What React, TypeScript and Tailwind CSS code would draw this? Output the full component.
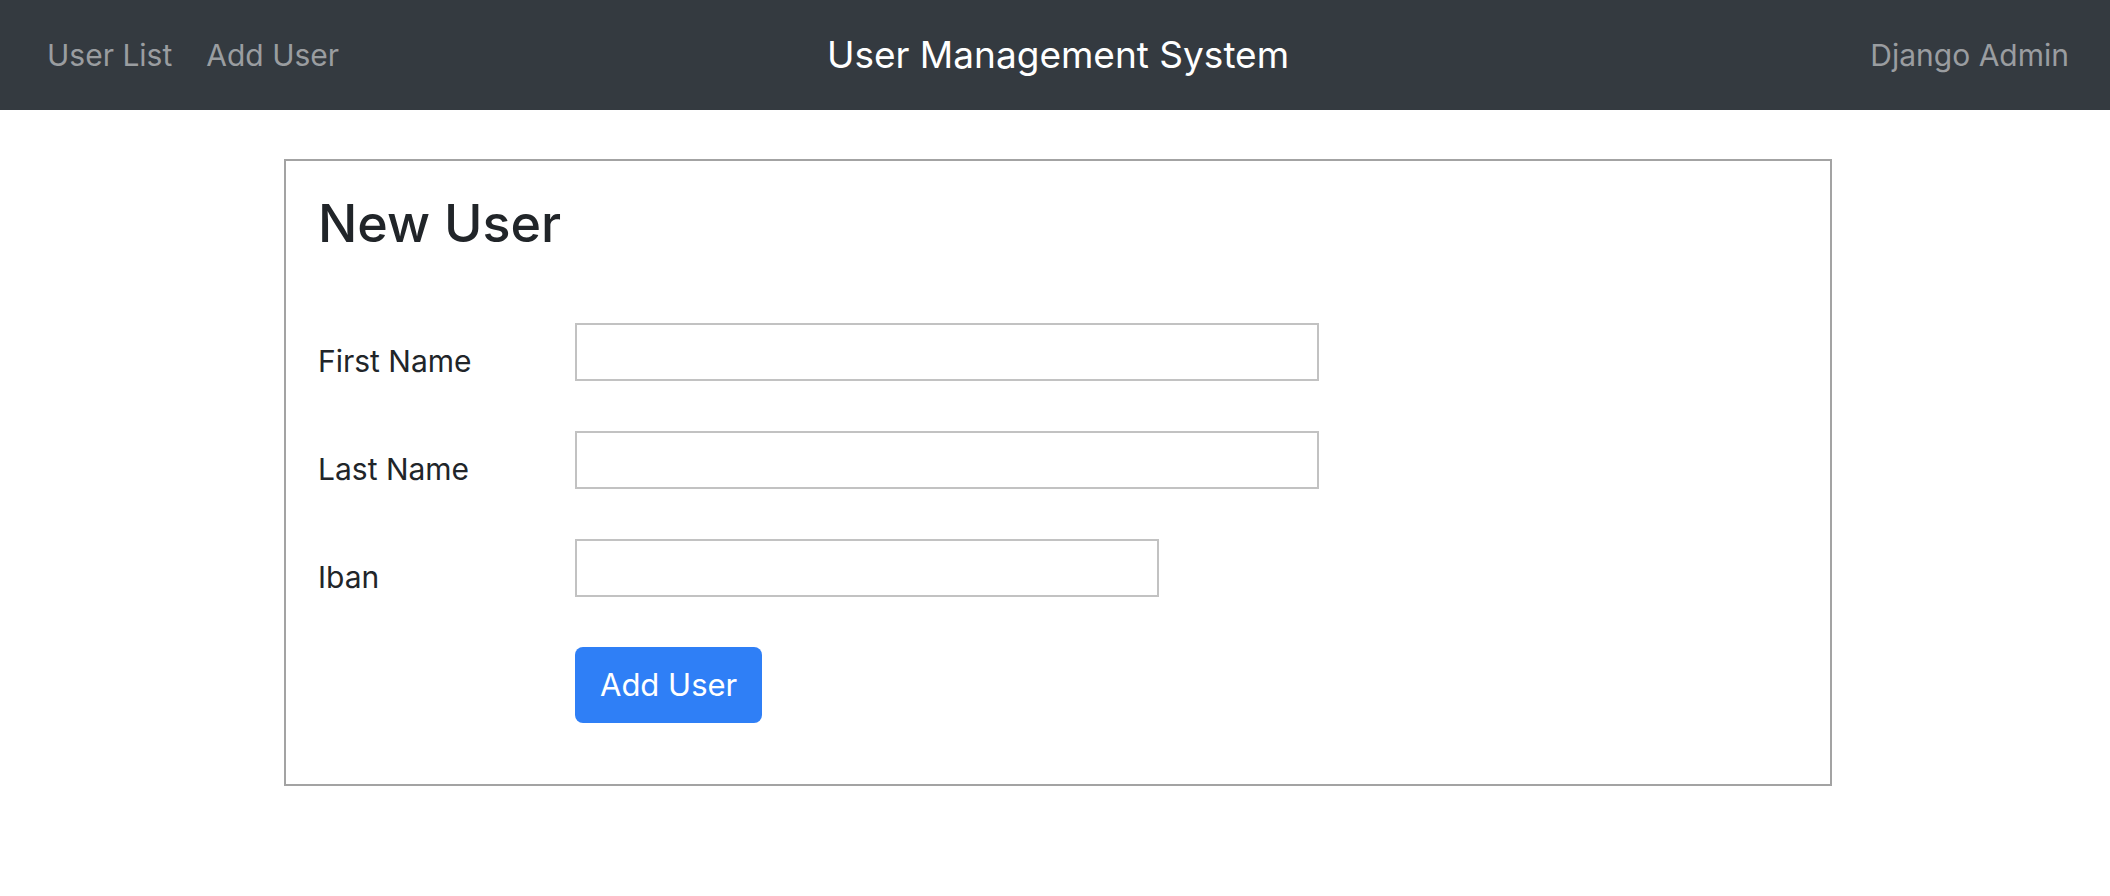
const font = { fontFamily: 'Inter, "Liberation Sans", sans-serif' };

function Field({ label, width }: { label: string; width: string }) {
  return (
    <div className="flex h-[58px] items-start">
      <label className="w-[257px] shrink-0 pt-[18px] text-[30px] leading-[40px] text-[#212529]">{label}</label>
      <input type="text" className={`${width} h-[58px] border-2 border-[#c2c2c2] bg-white outline-none`} />
    </div>
  );
}

export default function App() {
  return (
    <div className="min-h-[896px] bg-white" style={font}>
      <nav className="grid h-[110px] grid-cols-3 items-center bg-[#343a40] pl-[47px] pr-[41px]">
        <div className="flex items-center gap-[34px] text-[30px] text-[#9a9da0]">
          <a>User List</a>
          <a>Add User</a>
        </div>
        <div className="text-center text-[37px] text-white">User Management System</div>
        <div className="text-right text-[30px] text-[#9a9da0]">
          <a>Django Admin</a>
        </div>
      </nav>

      <div className="ml-[284px] mt-[49px] w-[1548px] border-2 border-[#a3a3a3] px-[32px] pb-[61px] pt-[32px]">
        <h2 className="text-[52px] leading-[62px] font-medium text-[#212529]">New User</h2>
        <form className="mt-[68px] flex flex-col gap-[50px]" onSubmit={(e) => e.preventDefault()}>
          <Field label="First Name" width="w-[744px]" />
          <Field label="Last Name" width="w-[744px]" />
          <Field label="Iban" width="w-[584px]" />
          <div className="flex">
            <div className="w-[257px] shrink-0" />
            <button type="submit" className="h-[76px] rounded-[8px] bg-[#2f7ff6] px-[25px] text-[31px] text-white">
              Add User
            </button>
          </div>
        </form>
      </div>
    </div>
  );
}
